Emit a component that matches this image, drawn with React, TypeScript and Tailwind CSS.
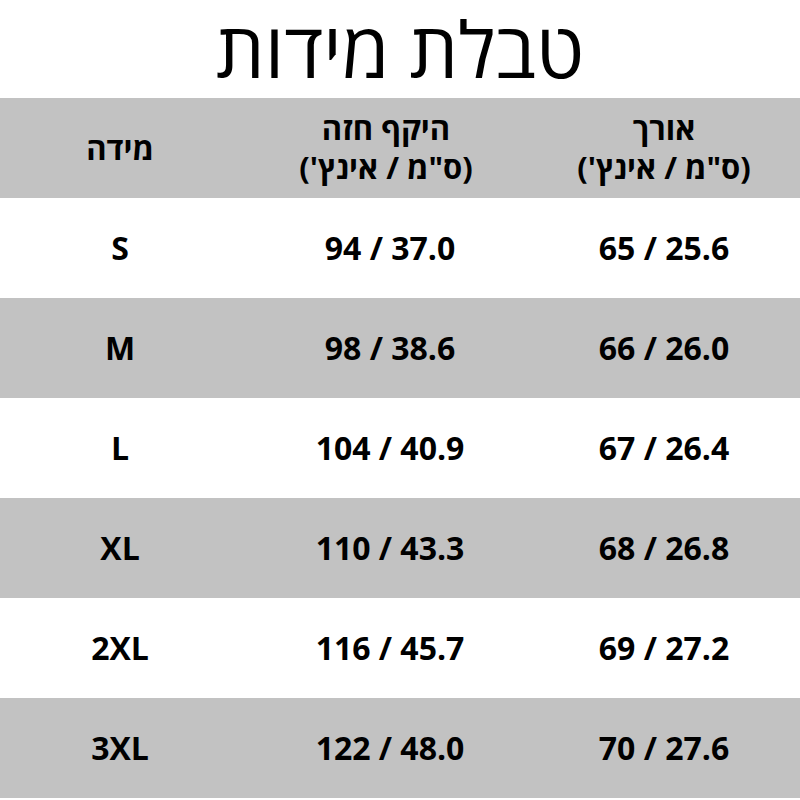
import React from "react";

const rows = [
  { size: "S", chest: "94 / 37.0", len: "65 / 25.6" },
  { size: "M", chest: "98 / 38.6", len: "66 / 26.0" },
  { size: "L", chest: "104 / 40.9", len: "67 / 26.4" },
  { size: "XL", chest: "110 / 43.3", len: "68 / 26.8" },
  { size: "2XL", chest: "116 / 45.7", len: "69 / 27.2" },
  { size: "3XL", chest: "122 / 48.0", len: "70 / 27.6" },
];

export default function App() {
  return (
    <div
      className="w-[800px] h-[800px] bg-white text-black flex flex-col overflow-hidden"
      style={{ fontFamily: '"Open Sans", "Noto Sans", sans-serif' }}
    >
      <div className="h-[98px] shrink-0 flex items-center justify-center">
        <h1 dir="rtl" className="text-[77px] leading-[84px] font-normal whitespace-nowrap px-4">
          טבלת מידות
        </h1>
      </div>
      <div className="h-[100px] shrink-0 bg-[#c2c2c2] grid grid-cols-[240px_288px_272px] items-center font-bold text-[31px] leading-[39px]">
        <div dir="rtl" className="text-center">מידה</div>
        <div dir="rtl" className="text-center pl-[4px]">
          <div>היקף חזה</div>
          <div>(ס"מ / אינץ')</div>
        </div>
        <div dir="rtl" className="text-center">
          <div>אורך</div>
          <div>(ס"מ / אינץ')</div>
        </div>
      </div>
      {rows.map((r, i) => (
        <div
          key={r.size}
          className={`h-[100px] shrink-0 grid grid-cols-[240px_288px_272px] items-center font-bold text-[32px] ${
            i % 2 === 0 ? "bg-white" : "bg-[#c2c2c2]"
          }`}
        >
          <div className="text-center">{r.size}</div>
          <div className="text-center pl-[12px]">{r.chest}</div>
          <div className="text-center">{r.len}</div>
        </div>
      ))}
    </div>
  );
}
